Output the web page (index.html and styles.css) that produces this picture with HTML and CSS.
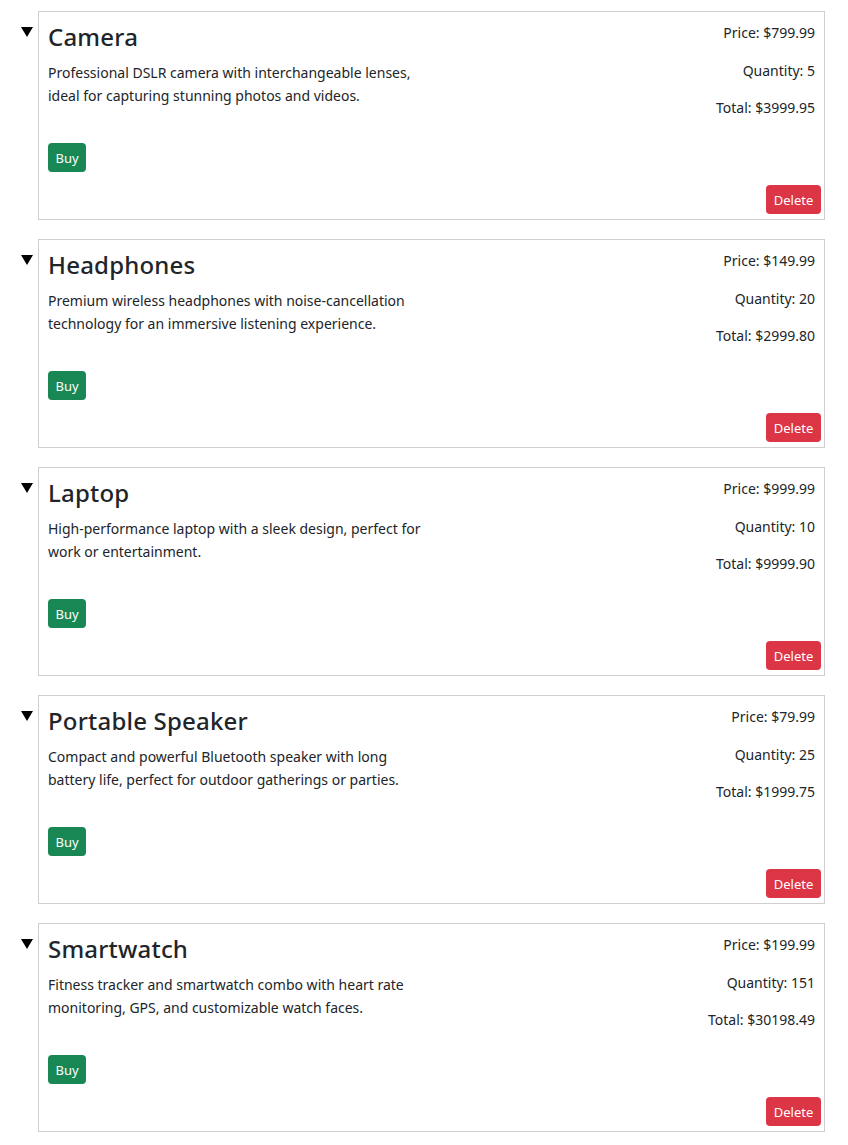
FILE: index.html
```html
<!DOCTYPE html>
<html lang="en">
<head>
<meta charset="utf-8">
<title>Products</title>
<link rel="stylesheet" href="styles.css">
</head>
<body>
<ul class="products">
  <li class="product">
    <span class="marker"><svg width="12" height="10" viewBox="0 0 12 10"><path d="M0 0H12L6 10Z" fill="#000"/></svg></span>
    <div class="card">
      <div class="card-top">
        <div class="info">
          <h4 class="title">Camera</h4>
          <p class="desc">Professional DSLR camera with interchangeable lenses, ideal for capturing stunning photos and videos.</p>
          <button class="btn btn-buy">Buy</button>
        </div>
        <div class="figures">
          <p>Price: $799.99</p>
          <p>Quantity: 5</p>
          <p>Total: $3999.95</p>
        </div>
      </div>
      <div class="card-actions"><button class="btn btn-delete">Delete</button></div>
    </div>
  </li>
  <li class="product">
    <span class="marker"><svg width="12" height="10" viewBox="0 0 12 10"><path d="M0 0H12L6 10Z" fill="#000"/></svg></span>
    <div class="card">
      <div class="card-top">
        <div class="info">
          <h4 class="title">Headphones</h4>
          <p class="desc">Premium wireless headphones with noise-cancellation technology for an immersive listening experience.</p>
          <button class="btn btn-buy">Buy</button>
        </div>
        <div class="figures">
          <p>Price: $149.99</p>
          <p>Quantity: 20</p>
          <p>Total: $2999.80</p>
        </div>
      </div>
      <div class="card-actions"><button class="btn btn-delete">Delete</button></div>
    </div>
  </li>
  <li class="product">
    <span class="marker"><svg width="12" height="10" viewBox="0 0 12 10"><path d="M0 0H12L6 10Z" fill="#000"/></svg></span>
    <div class="card">
      <div class="card-top">
        <div class="info">
          <h4 class="title">Laptop</h4>
          <p class="desc">High-performance laptop with a sleek design, perfect for work or entertainment.</p>
          <button class="btn btn-buy">Buy</button>
        </div>
        <div class="figures">
          <p>Price: $999.99</p>
          <p>Quantity: 10</p>
          <p>Total: $9999.90</p>
        </div>
      </div>
      <div class="card-actions"><button class="btn btn-delete">Delete</button></div>
    </div>
  </li>
  <li class="product">
    <span class="marker"><svg width="12" height="10" viewBox="0 0 12 10"><path d="M0 0H12L6 10Z" fill="#000"/></svg></span>
    <div class="card">
      <div class="card-top">
        <div class="info">
          <h4 class="title">Portable Speaker</h4>
          <p class="desc">Compact and powerful Bluetooth speaker with long battery life, perfect for outdoor gatherings or parties.</p>
          <button class="btn btn-buy">Buy</button>
        </div>
        <div class="figures">
          <p>Price: $79.99</p>
          <p>Quantity: 25</p>
          <p>Total: $1999.75</p>
        </div>
      </div>
      <div class="card-actions"><button class="btn btn-delete">Delete</button></div>
    </div>
  </li>
  <li class="product">
    <span class="marker"><svg width="12" height="10" viewBox="0 0 12 10"><path d="M0 0H12L6 10Z" fill="#000"/></svg></span>
    <div class="card">
      <div class="card-top">
        <div class="info">
          <h4 class="title">Smartwatch</h4>
          <p class="desc">Fitness tracker and smartwatch combo with heart rate monitoring, GPS, and customizable watch faces.</p>
          <button class="btn btn-buy">Buy</button>
        </div>
        <div class="figures">
          <p>Price: $199.99</p>
          <p>Quantity: 151</p>
          <p>Total: $30198.49</p>
        </div>
      </div>
      <div class="card-actions"><button class="btn btn-delete">Delete</button></div>
    </div>
  </li>
</ul>
</body>
</html>
```
FILE: styles.css
```css
body {
  margin: 0;
  font-family: "Noto Sans", "Open Sans", sans-serif;
  color: #212529;
  background: #fff;
}

.products {
  list-style: none;
  margin: 0;
  padding: 11px 0 13px 0;
  display: flex;
  flex-direction: column;
  gap: 19px;
}

.product {
  display: flex;
  align-items: flex-start;
}

.marker {
  width: 38px;
  box-sizing: border-box;
  padding: 16px 0 0 21px;
  display: flex;
}

.card {
  width: 787px;
  height: 209px;
  box-sizing: border-box;
  border: 1px solid #cfcfcf;
  padding: 10px 3px 5px 9px;
  display: flex;
  flex-direction: column;
  justify-content: space-between;
}

.card-top {
  display: flex;
  justify-content: space-between;
  padding-right: 6px;
}

.info {
  width: 383px;
}

.title {
  font-size: 24px;
  font-weight: 500;
  line-height: 29px;
  letter-spacing: 0.2px;
  margin: 0 0 10px;
}

.desc {
  font-size: 14px;
  line-height: 23px;
  margin: 0 0 36px;
}

.figures p {
  margin: 0 0 15px;
  text-align: right;
  font-size: 14px;
  line-height: 22.5px;
}

.btn {
  height: 29px;
  border: 0;
  border-radius: 4px;
  color: #fff;
  font-family: inherit;
  font-size: 13px;
  padding: 0 8px;
  cursor: pointer;
}

.btn-buy {
  background: #198754;
  width: 38px;
  padding: 0;
}

.card-actions {
  display: flex;
  justify-content: flex-end;
}

.btn-delete {
  background: #dc3545;
  width: 55px;
  padding: 0;
}
```
